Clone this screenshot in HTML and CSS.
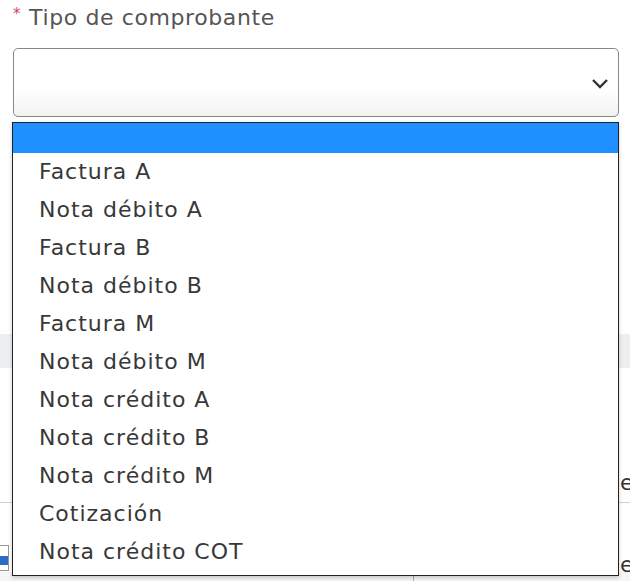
FILE: index.html
```html
<!DOCTYPE html>
<html lang="es">
<head>
<meta charset="utf-8">
<title>Tipo de comprobante</title>
<link rel="stylesheet" href="styles.css">
</head>
<body>
<div class="page">
  <div class="field">
    <label class="label"><span class="req">*</span>Tipo de comprobante</label>
    <div class="select">
      <svg class="chev" width="18" height="12" viewBox="0 0 18 12"><path d="M2 2 L9 9 L16 2" fill="none" stroke="#333" stroke-width="2.4"/></svg>
    </div>
  </div>
  <div class="backdrop">
    <div class="gap1"></div>
    <div class="band"></div>
    <div class="gap2"><span class="ghost g1">e</span></div>
    <div class="rule"></div>
    <div class="gap3"><span class="fileicon"></span><span class="ghost g2">e</span></div>
    <div class="foot"><span class="vline"></span></div>
  </div>
  <ul class="list">
    <li class="opt blank"></li>
    <li class="opt">Factura A</li>
    <li class="opt">Nota débito A</li>
    <li class="opt">Factura B</li>
    <li class="opt">Nota débito B</li>
    <li class="opt">Factura M</li>
    <li class="opt">Nota débito M</li>
    <li class="opt">Nota crédito A</li>
    <li class="opt">Nota crédito B</li>
    <li class="opt">Nota crédito M</li>
    <li class="opt">Cotización</li>
    <li class="opt">Nota crédito COT</li>
  </ul>
</div>
</body>
</html>
```
FILE: styles.css
```css
html, body { margin: 0; padding: 0; background: #fff; }
body { font-family: "DejaVu Sans", "Liberation Sans", sans-serif; width: 630px; height: 584px; overflow: hidden; }
.page { position: relative; width: 630px; height: 584px; }
.field { padding: 3px 11px 0 13px; }
.label { display: flex; align-items: flex-start; height: 39px; font-size: 22px; line-height: 30px; color: #555; letter-spacing: 0.6px; }
.req { color: #d0455e; font-size: 15px; margin-right: 8px; line-height: 22px; }
.select { height: 67px; border: 1.5px solid #888; border-radius: 5px; background: linear-gradient(#fff 0%, #fff 60%, #f4f1f1 100%); display: flex; align-items: center; justify-content: flex-end; padding-right: 9px; margin-top: 6px; }
.chev { margin-top: 2px; }
.backdrop { display: flex; flex-direction: column; }
.gap1 { height: 217px; }
.band { height: 34px; background: #eceef0; }
.gap2 { height: 134px; position: relative; }
.rule { height: 1px; background: #cfd2d5; }
.gap3 { height: 69px; position: relative; }
.foot { height: 9px; position: relative; background: #f6f6f6; }
.ghost { position: absolute; left: 620px; font-size: 22px; color: #333; }
.g1 { top: 102px; }
.g2 { top: 49px; }
.fileicon { position: absolute; left: 0; top: 42px; width: 8px; height: 24px; border: 1px solid #999; border-left: 0; background: linear-gradient(#fff 0, #fff 40%, #2b6cc4 40%, #2b6cc4 80%, #fff 80%); }
.vline { position: absolute; left: 413px; top: 0; width: 1px; height: 9px; background: #aaa; }
.list { position: absolute; left: 12px; top: 122px; width: 605px; margin: 0; padding: 0 0 4px 0; list-style: none; background: #fff; border: 1px solid #222; box-shadow: 0 2px 4px rgba(0,0,0,0.2); }
.opt { height: 38px; line-height: 38px; padding-left: 26px; font-size: 22px; color: #383838; letter-spacing: 1px; }
.opt.blank { height: 30px; background: #1e90ff; }
```
